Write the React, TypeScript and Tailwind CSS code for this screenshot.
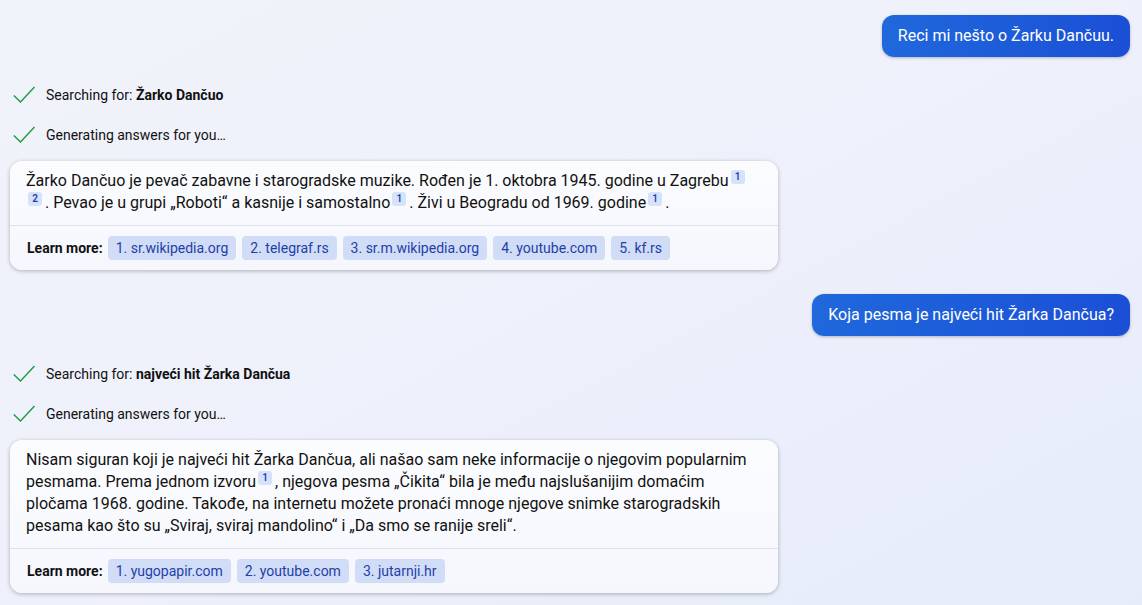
import React from "react";

const font = { fontFamily: "Roboto, sans-serif" };

function Check() {
  return (
    <svg width="24" height="18" viewBox="0 0 24 18" fill="none" className="shrink-0">
      <path d="M0.8 9.5 L7.5 16 L21.5 1" stroke="#1c9a42" strokeWidth="1.4" />
    </svg>
  );
}

function Status({ children }: { children: React.ReactNode }) {
  return (
    <div className="flex items-center h-[18px] pl-[13px] gap-[9px] text-[14px] leading-[18px] text-[#111]">
      <Check />
      <span>{children}</span>
    </div>
  );
}

function User({ children }: { children: React.ReactNode }) {
  return (
    <div className="flex justify-end pr-3">
      <div className="h-[42px] flex items-center px-4 rounded-[12px] text-white text-[16px] bg-gradient-to-r from-[#2068dc] to-[#1b4fd6] shadow-[0_1px_3px_rgba(0,0,0,0.25)]">
        {children}
      </div>
    </div>
  );
}

function Sup({ n }: { n: number }) {
  return (
    <sup className="inline-flex align-baseline relative -top-[6px] ml-[2px] mr-[3px] w-[14px] h-[14px] items-center justify-center rounded-[3px] bg-[#d6e1fa] text-[#1b3fb0] text-[10px] font-semibold leading-none">
      {n}
    </sup>
  );
}

function Card({ children, links }: { children: React.ReactNode; links: string[] }) {
  return (
    <div className="ml-[10px] w-[768px] rounded-[12px] bg-gradient-to-b from-[#fbfcfe] to-[#f6f7fd] shadow-[0_1px_4px_rgba(0,0,0,0.28)]">
      <div className="px-4 pt-[9px] pb-[11px] text-[16px] leading-[22px] text-[#111]">{children}</div>
      <div className="border-t border-[#dfe2e8] h-[45px] px-[17px] flex items-center gap-[5px] text-[14px]">
        <span className="font-bold text-[14px] text-[#111]">Learn more:</span>
        <div className="flex gap-[6px]">
          {links.map((l) => (
            <span key={l} className="h-[24px] flex items-center px-2 rounded-[4px] bg-[#d1dcf6] text-[#1f3fa8]">
              {l}
            </span>
          ))}
        </div>
      </div>
    </div>
  );
}

export default function App() {
  return (
    <div
      style={font}
      className="w-[1142px] h-[605px] overflow-hidden bg-gradient-to-br from-[#f1f3fa] via-[#eef0fb] to-[#e6ecfa] pt-[15px] flex flex-col"
    >
      <User>Reci mi nešto o Žarku Dančuu.</User>
      <div className="mt-[29px]">
        <Status>
          Searching for: <b>Žarko Dančuo</b>
        </Status>
      </div>
      <div className="mt-[22px]">
        <Status>Generating answers for you…</Status>
      </div>
      <div className="mt-[17px]">
        <Card links={["1. sr.wikipedia.org", "2. telegraf.rs", "3. sr.m.wikipedia.org", "4. youtube.com", "5. kf.rs"]}>
          Žarko Dančuo je pevač zabavne i starogradske muzike. Rođen je 1. oktobra 1945. godine u Zagrebu
          <Sup n={1} /> <Sup n={2} />. Pevao je u grupi „Roboti“ a kasnije i samostalno
          <Sup n={1} />. Živi u Beogradu od 1969. godine
          <Sup n={1} />.
        </Card>
      </div>
      <div className="mt-[24px]">
        <User>Koja pesma je najveći hit Žarka Dančua?</User>
      </div>
      <div className="mt-[29px]">
        <Status>
          Searching for: <b>najveći hit Žarka Dančua</b>
        </Status>
      </div>
      <div className="mt-[22px]">
        <Status>Generating answers for you…</Status>
      </div>
      <div className="mt-[17px]">
        <Card links={["1. yugopapir.com", "2. youtube.com", "3. jutarnji.hr"]}>
          Nisam siguran koji je najveći hit Žarka Dančua, ali našao sam neke informacije o njegovim popularnim pesmama. Prema jednom izvoru
          <Sup n={1} />, njegova pesma „Čikita“ bila je među najslušanijim domaćim pločama 1968. godine. Takođe, na internetu možete pronaći mnoge njegove snimke starogradskih pesama kao što su „Sviraj, sviraj mandolino“ i „Da smo se ranije sreli“.
        </Card>
      </div>
    </div>
  );
}
